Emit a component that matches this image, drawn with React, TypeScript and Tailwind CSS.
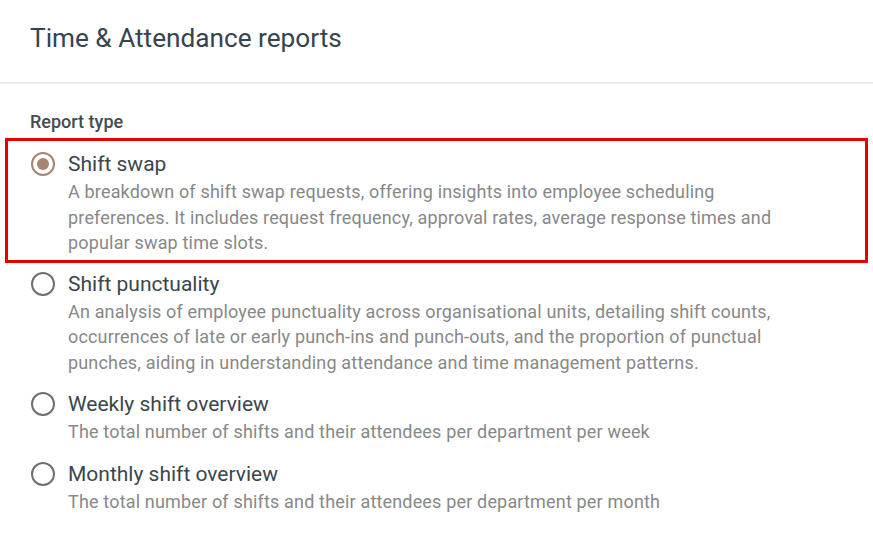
import React from "react";

type Opt = { title: string; desc: string; checked?: boolean; boxed?: boolean };

const options: Opt[] = [
  {
    title: "Shift swap",
    desc: "A breakdown of shift swap requests, offering insights into employee scheduling preferences. It includes request frequency, approval rates, average response times and popular swap time slots.",
    checked: true,
    boxed: true,
  },
  {
    title: "Shift punctuality",
    desc: "An analysis of employee punctuality across organisational units, detailing shift counts, occurrences of late or early punch-ins and punch-outs, and the proportion of punctual punches, aiding in understanding attendance and time management patterns.",
  },
  {
    title: "Weekly shift overview",
    desc: "The total number of shifts and their attendees per department per week",
  },
  {
    title: "Monthly shift overview",
    desc: "The total number of shifts and their attendees per department per month",
  },
];

function Radio({ checked }: { checked?: boolean }) {
  return (
    <span
      className={
        "mt-[3px] flex h-[24px] w-[24px] shrink-0 items-center justify-center rounded-full border-2 " +
        (checked ? "border-[#a88472]" : "border-[#6f6f6f]")
      }
    >
      {checked && <span className="h-[12px] w-[12px] rounded-full bg-[#a88472]" />}
    </span>
  );
}

export default function App() {
  return (
    <div
      className="h-[540px] w-[873px] overflow-hidden bg-white"
      style={{ fontFamily: "Roboto, 'Noto Sans', sans-serif" }}
    >
      <div className="flex h-[84px] items-center border-b-2 border-[#ececec] px-[30px] pb-[6px]">
        <h1 className="text-[26.2px] font-normal leading-[32px] text-[#36444d]">
          Time &amp; Attendance reports
        </h1>
      </div>
      <div className="px-[5px] pt-[26px]">
        <div className="pl-[25px] text-[18px] font-medium leading-[24px] text-[#454b50]">
          Report type
        </div>
        <div className="mt-[4px] flex flex-col">
          {options.map((o) => (
            <div
              key={o.title}
              className={
                "flex gap-[13px] " +
                (o.boxed
                  ? "w-[863px] border-[3px] border-[#e60000] pb-[4px] pt-[8px] pl-[23px]"
                  : "pl-[26px] pt-[6px] pb-[8px]")
              }
            >
              <Radio checked={o.checked} />
              <div className="flex w-[720px] flex-col">
                <div className="text-[21px] leading-[30px] text-[#3a464e]">{o.title}</div>
                <div className="text-[18px] leading-[25.5px] tracking-[0.17px] text-[#888888]">{o.desc}</div>
              </div>
            </div>
          ))}
        </div>
      </div>
    </div>
  );
}
